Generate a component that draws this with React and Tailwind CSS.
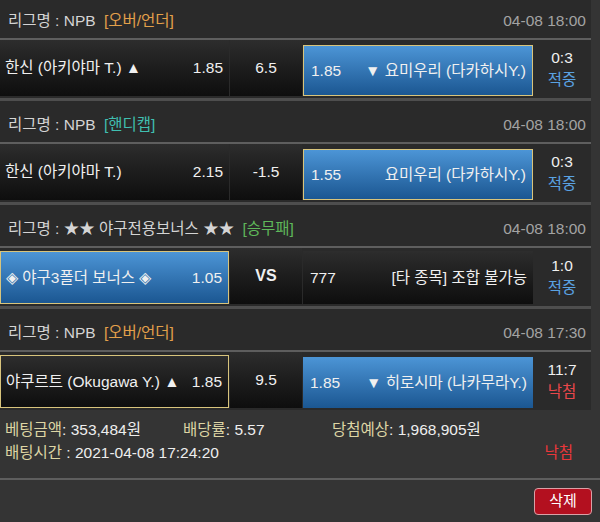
import React from 'react';

const FONT = { fontFamily: '"Liberation Sans", "Noto Sans CJK KR", sans-serif' };

const BETS = [
  {
    cat: '[오버/언더]', catColor: 'text-[#e3a04a]', date: '04-08 18:00',
    left: { name: '한신 (아키야마 T.) ▲', odds: '1.85' }, mid: '6.5',
    right: { name: '▼ 요미우리 (다카하시Y.)', odds: '1.85' }, pick: 'right',
    score: '0:3', result: '적중',
  },
  {
    cat: '[핸디캡]', catColor: 'text-[#40bfb0]', date: '04-08 18:00',
    left: { name: '한신 (아키야마 T.)', odds: '2.15' }, mid: '-1.5',
    right: { name: '요미우리 (다카하시Y.)', odds: '1.55' }, pick: 'right',
    score: '0:3', result: '적중',
  },
  {
    league: '★★ 야구전용보너스 ★★', cat: '[승무패]', catColor: 'text-[#5fb85a]', date: '04-08 18:00',
    left: { name: '◈ 야구3폴더 보너스 ◈', odds: '1.05' }, mid: 'VS',
    right: { name: '[타 종목] 조합 불가능', odds: '777' }, pick: 'left',
    score: '1:0', result: '적중',
  },
  {
    cat: '[오버/언더]', catColor: 'text-[#e3a04a]', date: '04-08 17:30',
    left: { name: '야쿠르트 (Okugawa Y.) ▲', odds: '1.85' }, mid: '9.5',
    right: { name: '▼ 히로시마 (나카무라Y.)', odds: '1.85' }, pick: 'left', rightBlue: true,
    score: '11:7', result: '낙첨',
  },
];

const blue = 'bg-gradient-to-b from-[#4c95d6] to-[#1b5792]';
const dark = 'bg-gradient-to-b from-[#2d2d2d] to-[#0e0e0e]';

function Block({ bet, last }) {
  const leftSel = bet.pick === 'left';
  const rightSel = bet.pick === 'right';
  const leftBg = leftSel && bet.mid === 'VS' ? blue : dark;
  const rightBg = rightSel || bet.rightBlue ? blue : dark;
  return (
    <div className="w-[591px]">
      <div className="h-[41px] bg-[#2a2a2a] flex items-center justify-between pt-[6px] pl-[8px] pr-[5px] text-[15.5px]">
        <div className="text-[#d4d4d4]">
          리그명 : {bet.league || 'NPB'} <span className={`ml-[4px] ${bet.catColor}`}>{bet.cat}</span>
        </div>
        <div className="text-[#a3a3a3]">{bet.date}</div>
      </div>
      <div className="h-[2px] bg-[#5e5e5e]" />
      <div className="h-[58px] flex bg-[#2a2a2a] pb-[2px] text-[15.5px] text-[#f0f0f0]">
        <div
          className={`w-[229px] flex items-center justify-between pl-[5px] pr-[6px] ${leftBg} ${
            leftSel ? 'border border-[#d8c47c] mt-[3px]' : ''
          }`}
        >
          <span>{bet.left.name}</span>
          <span>{bet.left.odds}</span>
        </div>
        <div className={`w-[72px] ml-[1px] flex items-center justify-center ${dark} ${bet.mid === 'VS' ? 'font-bold text-[16px]' : ''}`}>
          {bet.mid}
        </div>
        <div
          className={`w-[230px] ml-[1px] flex items-center justify-between pl-[7px] pr-[6px] ${rightBg} ${
            rightSel ? 'border border-[#d8c47c]' : ''
          } ${rightSel || bet.rightBlue ? 'mt-[5px]' : 'mt-[3px]'}`}
        >
          <span>{bet.right.odds}</span>
          <span>{bet.right.name}</span>
        </div>
        <div className="flex-1 flex flex-col items-center justify-center leading-[22px] pt-[2px]">
          <span>{bet.score}</span>
          <span className={bet.result === '낙첨' ? 'text-[#e9474a]' : 'text-[#5aa2e2]'}>{bet.result}</span>
        </div>
      </div>
      {!last && <div className="h-[3px] bg-[#4e4e4e]" />}
    </div>
  );
}

export default function App() {
  return (
    <div className="w-[600px] h-[522px] bg-[#343434] overflow-hidden" style={FONT}>
      {/* list is scrolled a few pixels, first header is cut at the top */}
      <div className="-mt-[3px]">
        {BETS.map((b, i) => (
          <Block key={i} bet={b} last={i === BETS.length - 1} />
        ))}
      </div>
      <div className="h-[68px] pt-[8px] pl-[5px] text-[15.5px] leading-[23px]">
        <div className="flex">
          <div className="w-[178px]">
            <span className="text-[#ddd5a4]">베팅금액</span>
            <span className="text-[#eeeeee]">: 353,484원</span>
          </div>
          <div className="w-[149px]">
            <span className="text-[#ddd5a4]">배당률</span>
            <span className="text-[#eeeeee]">: 5.57</span>
          </div>
          <div>
            <span className="text-[#ddd5a4]">당첨예상</span>
            <span className="text-[#eeeeee]">: 1,968,905원</span>
          </div>
        </div>
        <div className="flex justify-between pr-[27px]">
          <div>
            <span className="text-[#ddd5a4]">배팅시간</span>
            <span className="text-[#eeeeee]"> : 2021-04-08 17:24:20</span>
          </div>
          <span className="text-[#e9373a]">낙첨</span>
        </div>
      </div>
      <div className="h-[2px] bg-[#5e5e5e]" />
      <div className="flex justify-end pr-[8px] pt-[8px]">
        <button className="w-[58px] h-[27px] rounded-[4px] bg-[#b3101f] border border-[#d9a0a6] text-white text-[15px]">
          삭제
        </button>
      </div>
    </div>
  );
}
